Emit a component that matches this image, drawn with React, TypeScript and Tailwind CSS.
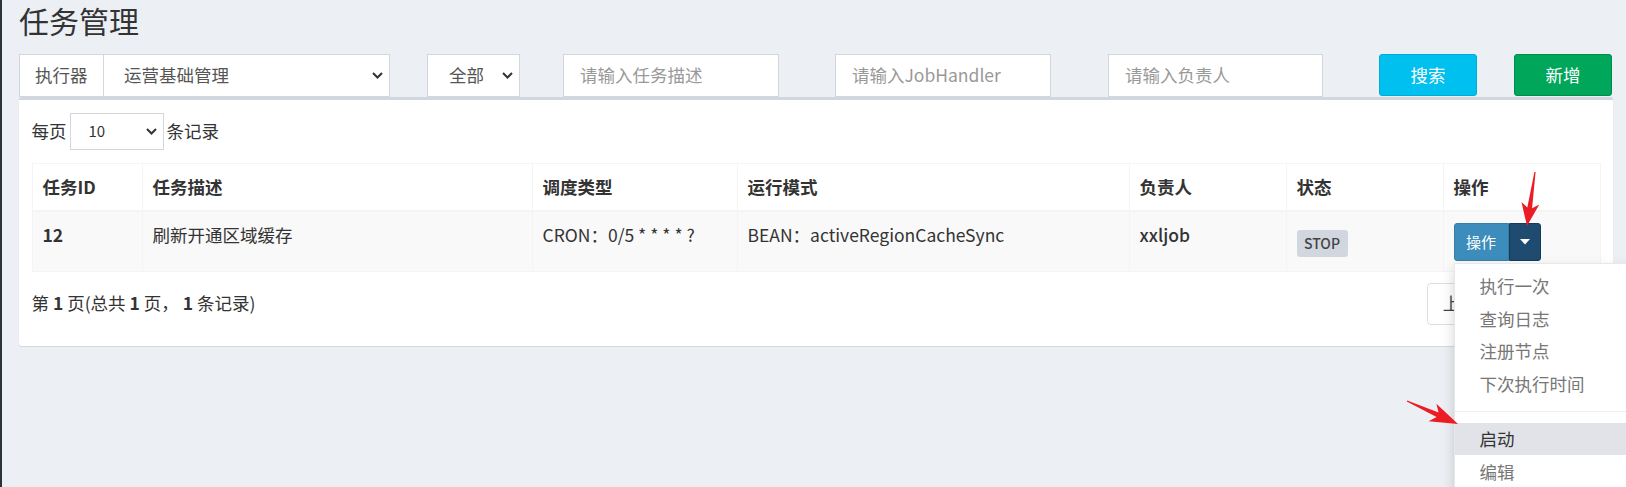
import React from 'react';

const font = { fontFamily: '"Noto Sans CJK SC", "Noto Sans", sans-serif' };

function Chevron({ className = '' }: { className?: string }) {
  return (
    <svg className={className} width="11" height="7" viewBox="0 0 11 7">
      <polyline points="1,1 5.5,5.5 10,1" fill="none" stroke="#333" strokeWidth="2" />
    </svg>
  );
}

// red annotation arrow, computed from tail to tip
function arrowPoints(x1: number, y1: number, x2: number, y2: number, headLen: number, headW: number) {
  const dx = x2 - x1;
  const dy = y2 - y1;
  const len = Math.hypot(dx, dy);
  const ux = dx / len;
  const uy = dy / len;
  const px = -uy;
  const py = ux;
  const bx = x2 - ux * headLen;
  const by = y2 - uy * headLen;
  const nx = x2 - ux * headLen * 0.8;
  const ny = y2 - uy * headLen * 0.8;
  const pts = [
    [x1 + px * 0.6, y1 + py * 0.6],
    [nx + px * 2.4, ny + py * 2.4],
    [bx + px * headW / 2, by + py * headW / 2],
    [x2, y2],
    [bx - px * headW / 2, by - py * headW / 2],
    [nx - px * 2.4, ny - py * 2.4],
    [x1 - px * 0.6, y1 - py * 0.6],
  ];
  return pts.map((p) => p.join(',')).join(' ');
}

const menuItems = ['执行一次', '查询日志', '注册节点', '下次执行时间'];

export default function App() {
  return (
    <div
      style={font}
      className="relative w-full h-[487px] overflow-hidden bg-[#ecf0f5] border-l-2 border-[#2a3339] pl-[17px] pr-[13px] text-[#333] text-[17.5px]"
    >
      <h1 className="h-[38px] leading-[40px] text-[30px] font-normal text-[#333]">任务管理</h1>

      {/* filters */}
      <div className="mt-[16px] flex h-[43px]">
        <div className="flex w-[371px] h-full border border-[#d2d6de] bg-white">
          <div className="w-[84px] shrink-0 border-r border-[#d2d6de] flex items-center pl-[15px] text-[#555]">执行器</div>
          <div className="flex-1 flex items-center justify-between pl-[20px] pr-[6px] text-[#555]">
            <span>运营基础管理</span>
            <Chevron />
          </div>
        </div>
        <div className="ml-[37px] w-[93px] h-full border border-[#d2d6de] bg-white flex items-center justify-between pl-[21px] pr-[6px] text-[#555]">
          <span>全部</span>
          <Chevron />
        </div>
        <div className="ml-[43px] w-[216px] h-full border border-[#d2d6de] bg-white flex items-center pl-[16px] text-[#999]">请输入任务描述</div>
        <div className="ml-[56px] w-[216px] h-full border border-[#d2d6de] bg-white flex items-center pl-[16px] text-[#999]">请输入JobHandler</div>
        <div className="ml-[57px] w-[215px] h-full border border-[#d2d6de] bg-white flex items-center pl-[16px] text-[#999]">请输入负责人</div>
        <div className="ml-[56px] w-[98px] h-[42px] rounded-[3px] bg-[#00c0ef] border border-[#00acd6] text-white flex items-center justify-center">搜索</div>
        <div className="ml-[37px] w-[98px] h-[42px] rounded-[3px] bg-[#00a65a] border border-[#008d4c] text-white flex items-center justify-center">新增</div>
      </div>

      {/* card */}
      <div className="w-[1594px] bg-white border-t-[3px] border-[#d2d6de] rounded-[3px] shadow-[0_1px_1px_rgba(0,0,0,0.1)] px-[12.5px] pt-[12.5px] pb-[13px]">
        <div className="flex items-center h-[37px]">
          <span>每页</span>
          <div className="ml-[3px] w-[94px] h-[37px] border border-[#d2d6de] flex items-center justify-between pl-[18px] pr-[6px] text-[15px]">
            <span>10</span>
            <Chevron />
          </div>
          <span className="ml-[3px]">条记录</span>
        </div>

        <table className="mt-[13px] w-full table-fixed border-collapse">
          <colgroup>
            <col className="w-[110px]" />
            <col className="w-[390px]" />
            <col className="w-[205px]" />
            <col className="w-[392px]" />
            <col className="w-[157px]" />
            <col className="w-[157px]" />
            <col />
          </colgroup>
          <thead>
            <tr className="text-left">
              {['任务ID', '任务描述', '调度类型', '运行模式', '负责人', '状态', '操作'].map((h) => (
                <th key={h} className="border border-[#f4f4f4] border-b-2 p-[10px] leading-[26px] font-bold">{h}</th>
              ))}
            </tr>
          </thead>
          <tbody>
            <tr className="bg-[#f9f9f9] align-top">
              <td className="border border-[#f4f4f4] p-[10px] leading-[25px] font-bold">12</td>
              <td className="border border-[#f4f4f4] p-[10px] leading-[25px]">刷新开通区域缓存</td>
              <td className="border border-[#f4f4f4] p-[10px] leading-[25px]">CRON：0/5 * * * * ?</td>
              <td className="border border-[#f4f4f4] p-[10px] leading-[25px]">BEAN：activeRegionCacheSync</td>
              <td className="border border-[#f4f4f4] p-[10px] leading-[25px] font-medium">xxljob</td>
              <td className="border border-[#f4f4f4] p-[10px] leading-[25px]">
                <span className="mt-[8px] inline-flex items-center justify-center w-[51px] h-[27px] rounded-[3px] bg-[#d2d6de] text-[#444] text-[14px] font-medium">STOP</span>
              </td>
              <td className="border border-[#f4f4f4] p-[10px] leading-[25px]">
                <div className="relative inline-flex h-[38px] mt-[1px]">
                  <div className="w-[55px] h-full bg-[#3c8dbc] border border-[#367fa9] rounded-l-[3px] text-white text-[15px] flex items-center justify-center">操作</div>
                  <div className="w-[32px] h-full bg-[#1f4b70] border border-[#173a57] rounded-r-[3px] flex items-center justify-center">
                    <svg width="10" height="6" viewBox="0 0 10 6"><polygon points="0,0 10,0 5,5.5" fill="#fff" /></svg>
                  </div>
                  <div className="absolute left-0 top-[40px] z-20 w-[212px] bg-white border border-[#e8e8e8] shadow-[0_6px_12px_rgba(0,0,0,0.175)] py-[6px]">
                    {menuItems.map((m) => (
                      <div key={m} className="h-[32.5px] flex items-center pl-[25px] text-[#777] text-[17.5px] font-normal">{m}</div>
                    ))}
                    <div className="my-[11px] h-px bg-[#eee]" />
                    <div className="h-[32.5px] flex items-center pl-[25px] text-[#333] bg-[#e1e3e9]">启动</div>
                    <div className="h-[32.5px] flex items-center pl-[25px] text-[#777]">编辑</div>
                    <div className="h-[32.5px] flex items-center pl-[25px] text-[#777]">删除</div>
                    <div className="h-[32.5px] flex items-center pl-[25px] text-[#777]">复制</div>
                  </div>
                </div>
              </td>
            </tr>
          </tbody>
        </table>

        <div className="mt-[11px] mb-[8px] h-[42px] flex items-center justify-between">
          <div>
            第 <b>1</b> 页(总共 <b>1</b> 页， <b>1</b> 条记录)
          </div>
          <div className="flex h-[42px] text-[#444]">
            <div className="border border-[#ddd] rounded-l-[4px] px-[15px] flex items-center">上页</div>
            <div className="border border-[#ddd] border-l-0 px-[15px] flex items-center">1</div>
            <div className="border border-[#ddd] border-l-0 rounded-r-[4px] px-[15px] flex items-center">下页</div>
          </div>
        </div>
      </div>

      {/* annotation arrows */}
      <svg className="pointer-events-none absolute left-0 top-0 z-30" width="1626" height="487">
        <polygon points={arrowPoints(1533, 172, 1525, 226, 23, 18)} fill="#ec1c24" />
        <polygon points={arrowPoints(1405, 401, 1456, 424, 28, 19)} fill="#ec1c24" />
      </svg>
    </div>
  );
}
